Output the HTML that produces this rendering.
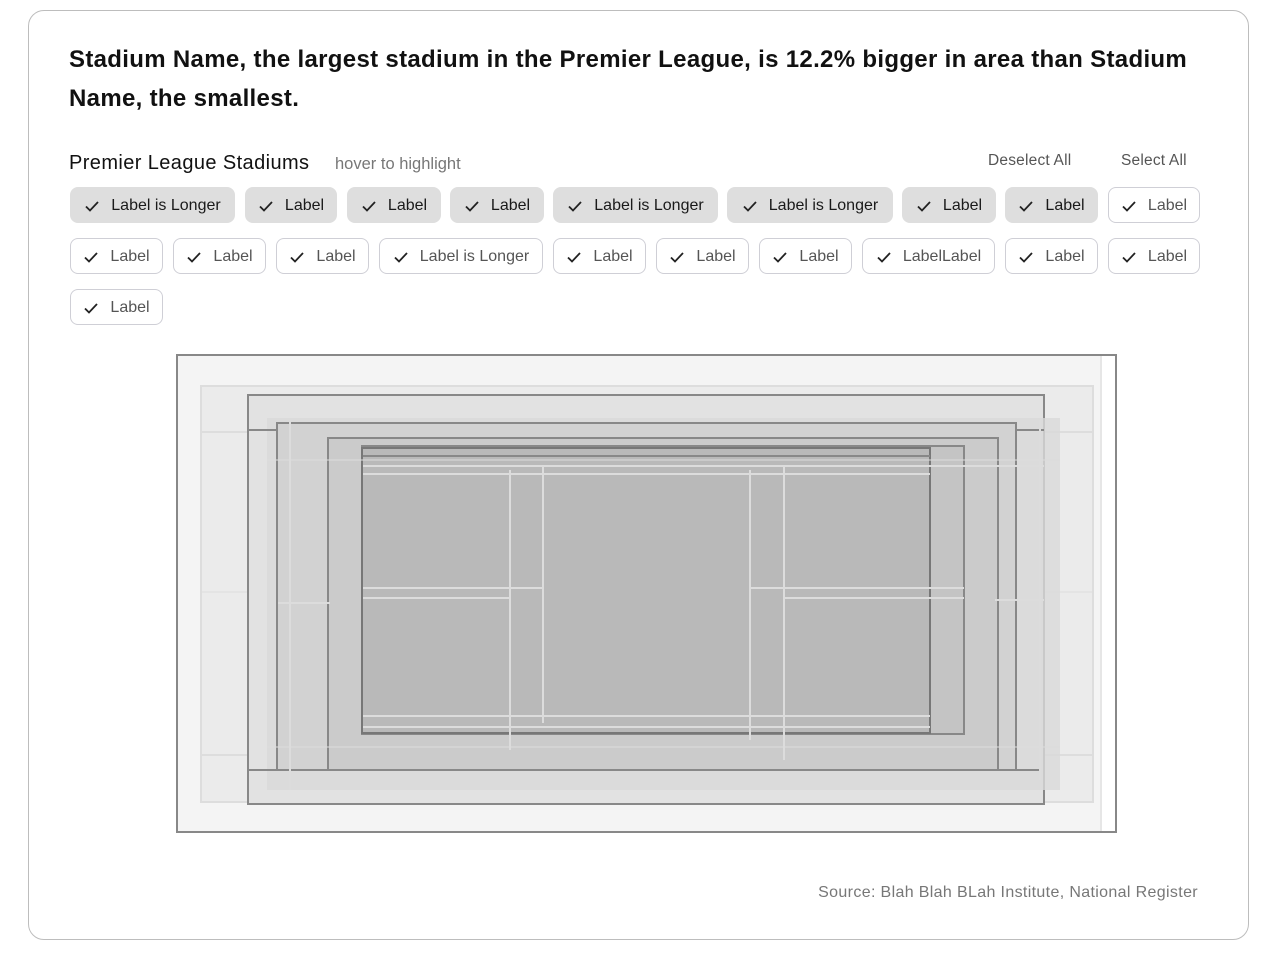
<!DOCTYPE html>
<html><head><meta charset="utf-8"><style>
body{margin:0;width:1266px;height:954px;background:#fff;font-family:"Liberation Sans",sans-serif;position:relative;overflow:hidden}
.card{position:absolute;left:28px;top:10px;width:1219px;height:928px;border:1px solid #bdbdbd;border-radius:16px}
.h{position:absolute;left:69px;top:40px;width:1160px;font-size:24px;line-height:39px;font-weight:bold;color:#111;letter-spacing:0.32px}
.t{position:absolute;left:69px;top:152px;font-size:20px;color:#111;letter-spacing:0.4px}
.hv{position:absolute;left:335px;top:155px;font-size:16.5px;color:#777}
.lk{position:absolute;top:152px;font-size:15.5px;color:#555;letter-spacing:0.2px}
.c{position:absolute;height:34px;border-radius:8px;box-sizing:border-box;font-size:16px;display:flex;align-items:center;justify-content:center;padding-top:2px}
.f{background:#dedede;color:#1a1a1a;border:1px solid #dedede;height:36px}
.o{background:#fff;color:#555;border:1px solid #cfcfd6;height:36px}
.c svg{margin-right:11px}
.src{position:absolute;right:68px;top:884px;font-size:16px;color:#777;letter-spacing:0.35px}
</style></head><body>
<div class="card"></div>
<div class="h">Stadium Name, the largest stadium in the Premier League, is 12.2% bigger in area than Stadium Name, the smallest.</div>
<div class="t">Premier League Stadiums</div>
<div class="hv">hover to highlight</div>
<div class="lk" style="left:988px">Deselect All</div>
<div class="lk" style="left:1121px">Select All</div>

<div id="chips"></div>
<script>
var ck='<svg width="16" height="12" viewBox="0 0 16 12"><path d="M2 6.5l4 4 8-8.5" fill="none" stroke="#222" stroke-width="1.8"/></svg>';
var rows=[[187,'f',[[70,235,'Label is Longer'],[245,337,'Label'],[347,441,'Label'],[450,544,'Label'],[553,718,'Label is Longer'],[727,893,'Label is Longer'],[902,996,'Label'],[1005,1098,'Label']]],
[187,'o',[[1108,1200,'Label']]],
[238,'o',[[70,163,'Label'],[173,266,'Label'],[276,369,'Label'],[379,543,'Label is Longer'],[553,646,'Label'],[656,749,'Label'],[759,852,'Label'],[862,995,'LabelLabel'],[1005,1098,'Label'],[1108,1200,'Label']]],
[289,'o',[[70,163,'Label']]]];
var h='';rows.forEach(function(r){r[2].forEach(function(c){h+='<div class="c '+r[1]+'" style="left:'+c[0]+'px;top:'+r[0]+'px;width:'+(c[1]-c[0])+'px">'+ck+c[2]+'</div>';});});
document.getElementById('chips').innerHTML=h;
</script>

<svg style="position:absolute;left:0;top:0" width="1266" height="954">
<rect x="177" y="355" width="939" height="477" fill="#fff" stroke="#888" stroke-width="2"/>
<rect x="178" y="356" width="923" height="475" fill="#f4f4f4"/>
<line x1="1101" y1="356" x2="1101" y2="831" stroke="#e6e6e6" stroke-width="2"/>
<rect x="201" y="386" width="892" height="416" fill="#ebebeb" stroke="#ddd" stroke-width="2"/>
<line x1="201" y1="432" x2="1093" y2="432" stroke="#ddd" stroke-width="2"/>
<line x1="201" y1="755" x2="1093" y2="755" stroke="#ddd" stroke-width="2"/>
<line x1="201" y1="592" x2="1093" y2="592" stroke="#ddd" stroke-width="1"/>
<rect x="248" y="395" width="796" height="409" fill="#e2e2e2" stroke="#888" stroke-width="2"/>
<rect x="267" y="418" width="793" height="372" fill="#d9d9d9" opacity="0.8"/>
<line x1="249" y1="430" x2="1044" y2="430" stroke="#888" stroke-width="2"/>
<line x1="249" y1="770" x2="1040" y2="770" stroke="#888" stroke-width="2"/>
<rect x="277" y="423" width="739" height="347" fill="#d2d2d2" stroke="#888" stroke-width="2"/>
<rect x="328" y="438" width="670" height="332" fill="#cbcbcb" stroke="#888" stroke-width="2"/>
<rect x="362" y="446" width="602" height="288" fill="#c4c4c4" stroke="#888" stroke-width="2"/>
<rect x="362" y="448" width="568" height="285" fill="#b9b9b9" stroke="#777" stroke-width="2"/>
<line x1="363" y1="456" x2="930" y2="456" stroke="#888" stroke-width="2"/>
<g stroke="#dcdcdc" stroke-width="2" fill="none">
<line x1="363" y1="466" x2="1044" y2="466"/>
<line x1="363" y1="474" x2="930" y2="474"/>
<line x1="363" y1="716" x2="930" y2="716"/>
<line x1="363" y1="727" x2="930" y2="727"/>
<line x1="267" y1="460" x2="1060" y2="460" stroke-width="1"/>
<line x1="267" y1="747" x2="1060" y2="747" stroke-width="1"/>
<line x1="510" y1="470" x2="510" y2="750"/>
<line x1="543" y1="466" x2="543" y2="723"/>
<line x1="750" y1="470" x2="750" y2="740"/>
<line x1="784" y1="466" x2="784" y2="760"/>
<line x1="363" y1="588" x2="543" y2="588"/>
<line x1="363" y1="598" x2="510" y2="598"/>
<line x1="750" y1="588" x2="964" y2="588"/>
<line x1="784" y1="598" x2="964" y2="598"/>
<line x1="290" y1="420" x2="290" y2="790"/>
<line x1="1040" y1="420" x2="1040" y2="780"/>
<line x1="278" y1="603" x2="330" y2="603"/>
<line x1="995" y1="600" x2="1044" y2="600"/>
</g>
</svg>
<div class="src">Source: Blah Blah BLah Institute, National Register</div>
</body></html>
